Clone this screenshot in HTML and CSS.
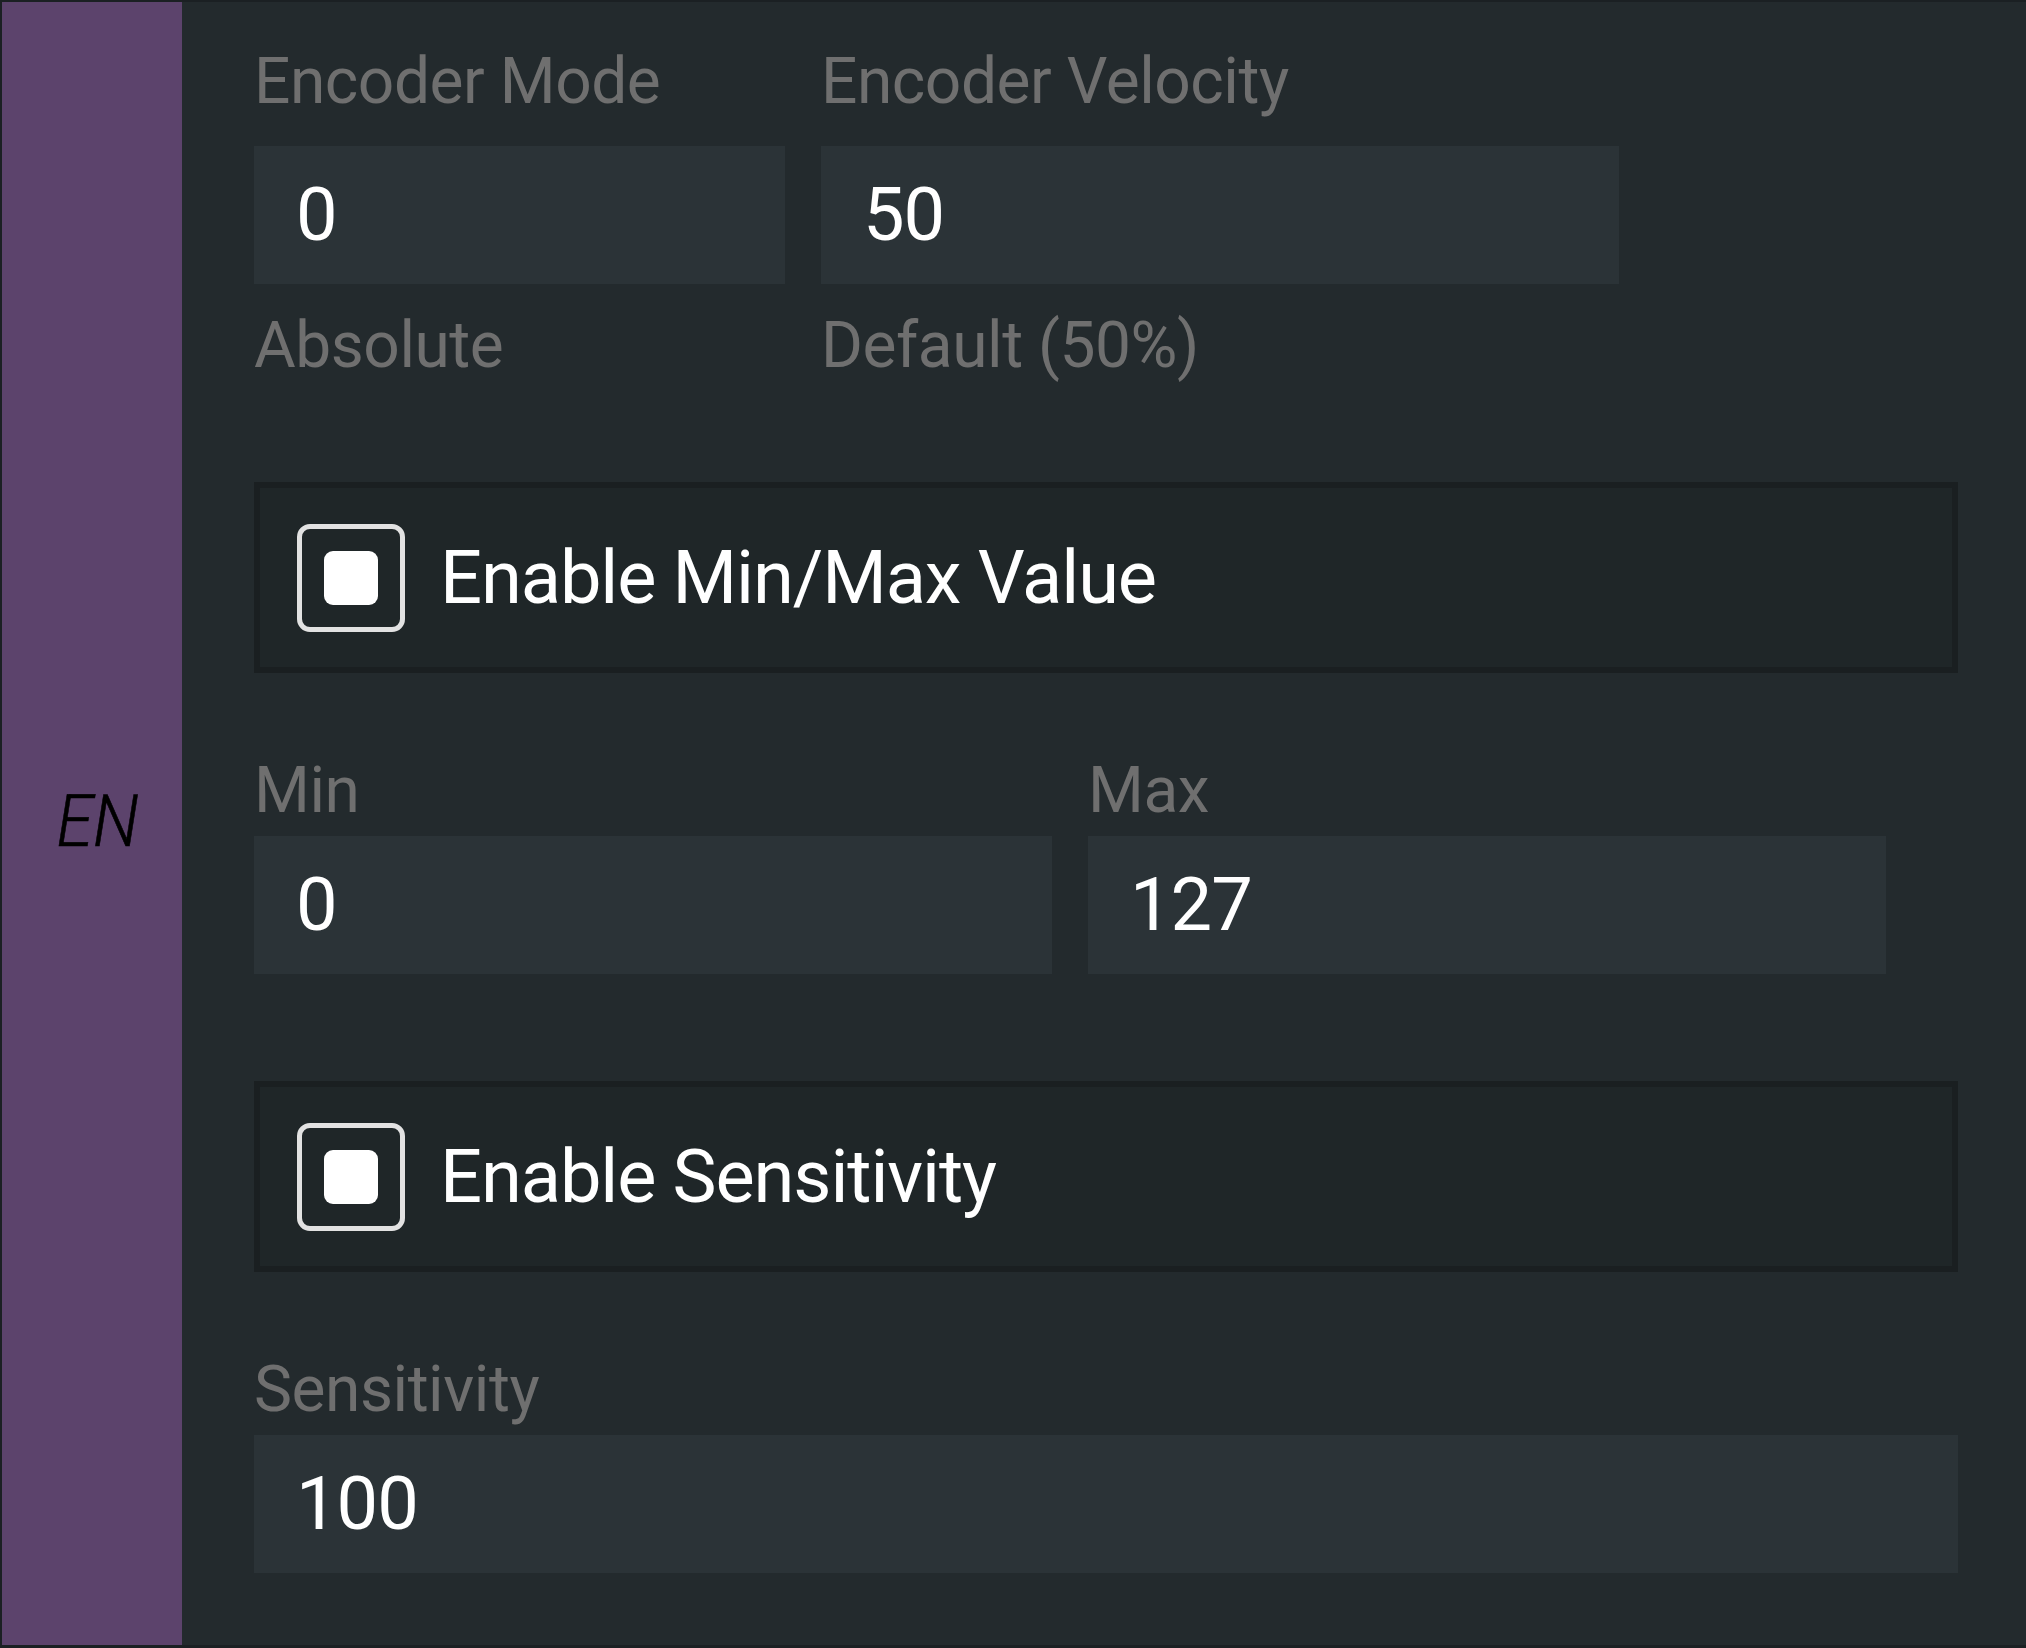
FILE: index.html
```html
<!DOCTYPE html>
<html lang="en">
<head>
<meta charset="utf-8">
<title>Encoder settings</title>
<link rel="stylesheet" href="styles.css">
</head>
<body>
<div class="panel">
  <aside class="side"><span class="tag">EN</span></aside>
  <main class="content">
    <div class="row top-row">
      <div class="field field-mode">
        <div class="label">Encoder Mode</div>
        <div class="input">0</div>
        <div class="hint">Absolute</div>
      </div>
      <div class="field field-wide">
        <div class="label">Encoder Velocity</div>
        <div class="input">50</div>
        <div class="hint">Default (50%)</div>
      </div>
    </div>

    <div class="toggle toggle-first">
      <span class="checkbox"><span class="checkbox-dot"></span></span>
      <span class="toggle-text">Enable Min/Max Value</span>
    </div>

    <div class="row text-row">
      <div class="field field-wide">
        <div class="label label-tight">Min</div>
        <div class="input">0</div>
      </div>
      <div class="field field-wide">
        <div class="label label-tight">Max</div>
        <div class="input">127</div>
      </div>
    </div>

    <div class="toggle toggle-second">
      <span class="checkbox"><span class="checkbox-dot"></span></span>
      <span class="toggle-text">Enable Sensitivity</span>
    </div>

    <div class="field field-full text-row">
      <div class="label label-tight">Sensitivity</div>
      <div class="input">100</div>
    </div>
  </main>
</div>
</body>
</html>
```

FILE: styles.css
```css
* {
  box-sizing: border-box;
}

html, body {
  margin: 0;
  padding: 0;
  background: #232a2d;
}

body {
  font-family: Roboto, "Noto Sans", "Liberation Sans", sans-serif;
}

.panel {
  width: 2026px;
  height: 1648px;
  display: flex;
  background: #232a2d;
  border-top: 2px solid #1b2023;
  border-left: 2px solid #1b2023;
  border-bottom: 3px solid #1b2023;
  overflow: hidden;
}

.side {
  width: 180px;
  flex: 0 0 180px;
  background: #5c436c;
  display: flex;
  align-items: center;
  justify-content: center;
}

.tag {
  font-family: Roboto, sans-serif;
  font-style: italic;
  font-weight: 300;
  font-size: 72px;
  line-height: 72px;
  color: #000000;
  margin-left: 12px;
  margin-top: -4px;
  transform: scaleX(0.92);
  -webkit-text-stroke: 0.6px #000000;
  display: inline-block;
}

.content {
  flex: 1;
  padding: 48px 68px 0 72px;
  display: flex;
  flex-direction: column;
}

.row {
  display: flex;
  gap: 36px;
}

.field {
  display: flex;
  flex-direction: column;
}

.field-mode {
  width: 531px;
}

.field-wide {
  width: 798px;
}

.field-full {
  width: 100%;
}

.label {
  font-size: 64px;
  line-height: 64px;
  letter-spacing: -0.45px;
  color: #6f6f6f;
  white-space: nowrap;
  margin-bottom: 32px;
}

.label-tight {
  margin-bottom: 13px;
}

.input {
  height: 138px;
  background: #2b3337;
  color: #ffffff;
  font-size: 74px;
  line-height: 138px;
  letter-spacing: -1px;
  padding: 0 42px;
}

.hint {
  font-size: 64px;
  line-height: 64px;
  letter-spacing: -0.45px;
  color: #6f6f6f;
  margin-top: 30px;
  white-space: nowrap;
}

.toggle {
  height: 191px;
  background: #1f2628;
  border: 6px solid #1a1f21;
  display: flex;
  align-items: center;
  padding-left: 37px;
  gap: 35px;
}

.toggle-first {
  margin-top: 104px;
}

.toggle-second {
  margin-top: 107px;
}

.text-row {
  margin-top: 86px;
}

.checkbox {
  width: 108px;
  height: 108px;
  border: 5px solid #e2e2e2;
  border-radius: 13px;
  display: flex;
  align-items: center;
  justify-content: center;
  flex: 0 0 108px;
}

.checkbox-dot {
  width: 54px;
  height: 54px;
  background: #ffffff;
  border-radius: 9px;
}

.toggle-text {
  font-size: 74px;
  line-height: 74px;
  letter-spacing: -1.1px;
  color: #ffffff;
  white-space: nowrap;
}
```
